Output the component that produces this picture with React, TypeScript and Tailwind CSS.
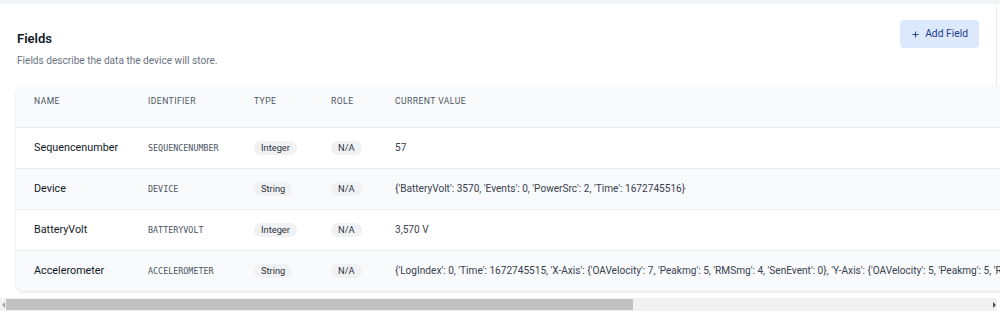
import { Plus } from 'lucide-react'

interface Field {
  name: string
  identifier: string
  type: string
  role: string
  value: string
}

const fields: Field[] = [
  { name: 'Sequencenumber', identifier: 'SEQUENCENUMBER', type: 'Integer', role: 'N/A', value: '57' },
  {
    name: 'Device',
    identifier: 'DEVICE',
    type: 'String',
    role: 'N/A',
    value: "{'BatteryVolt': 3570, 'Events': 0, 'PowerSrc': 2, 'Time': 1672745516}",
  },
  { name: 'BatteryVolt', identifier: 'BATTERYVOLT', type: 'Integer', role: 'N/A', value: '3,570 V' },
  {
    name: 'Accelerometer',
    identifier: 'ACCELEROMETER',
    type: 'String',
    role: 'N/A',
    value:
      "{'LogIndex': 0, 'Time': 1672745515, 'X-Axis': {'OAVelocity': 7, 'Peakmg': 5, 'RMSmg': 4, 'SenEvent': 0}, 'Y-Axis': {'OAVelocity': 5, 'Peakmg': 5, 'RMSmg': 4, 'SenEvent': 0}, 'Z-Axis': {'OAVelocity': 6, 'Peakmg': 5, 'RMSmg': 4, 'SenEvent': 0}}",
  },
]

const cols = 'grid grid-cols-[114px_106px_77px_64px_1fr] pl-[18px]'

function Badge({ children }: { children: React.ReactNode }) {
  return (
    <span className="inline-flex items-center h-[14px] px-[7px] rounded-full bg-[#f0f1f3] text-[9.3px] text-[#2d3340]">
      {children}
    </span>
  )
}

export default function App() {
  return (
    <div className="w-[1000px] h-[322px] overflow-hidden bg-[#f3f4f6] pt-[4px] font-['Roboto',sans-serif]">
      <div className="bg-white">
        {/* card header */}
        <div className="flex items-start justify-between mr-[3px] pl-[17px] pr-[17px] pt-[16px] pb-[19px] border-r border-[#e5e7eb] rounded-tr-md">
          <div className="pt-[11px]">
            <h2 className="text-[13px] leading-[16px] font-semibold text-[#111827]">Fields</h2>
            <p className="mt-[8px] text-[10.1px] leading-[12px] text-[#6b7280]">Fields describe the data the device will store.</p>
          </div>
          <button className="flex items-center gap-[5px] h-[28px] pl-[11px] pr-[11px] rounded-[4px] bg-[#dce8fb] text-[10.3px] text-[#1e3a8a]">
            <Plus className="w-[9px] h-[9px]" strokeWidth={2.5} />
            Add Field
          </button>
        </div>

        {/* table */}
        <div className="pl-[16px] pb-[7px]">
          <div className="w-[1600px] rounded-lg overflow-hidden bg-white shadow-[0_1px_3px_rgba(0,0,0,0.13)]">
            <div className={`${cols} h-[41px] pt-[9px] bg-[#f9fafb] text-[8.6px] leading-[12px] tracking-[0.05em] text-[#4b5563]`}>
              <div>NAME</div>
              <div>IDENTIFIER</div>
              <div>TYPE</div>
              <div>ROLE</div>
              <div>CURRENT VALUE</div>
            </div>
            {fields.map((f, i) => (
              <div
                key={f.identifier}
                className={`${cols} items-center h-[41px] border-t border-[#e8eaed] ${i % 2 === 1 ? 'bg-[#f9fafb]' : 'bg-white'}`}
              >
                <div className="text-[10.8px] text-[#111827]">{f.name}</div>
                <div className="font-['DejaVu_Sans_Mono',monospace] text-[8.4px] text-[#4b5563]">{f.identifier}</div>
                <div className="flex"><Badge>{f.type}</Badge></div>
                <div className="flex"><Badge>{f.role}</Badge></div>
                <div className="whitespace-nowrap text-[10.1px] text-[#374151]">{f.value}</div>
              </div>
            ))}
          </div>
        </div>

        {/* horizontal scrollbar */}
        <div className="flex items-center h-[13px] bg-[#f1f1f1] mr-[3px]">
          <div className="w-[6px] flex justify-center">
            <span className="w-0 h-0 border-y-[3px] border-y-transparent border-r-[3px] border-r-[#a3a3a3]" />
          </div>
          <div className="w-[627px] h-[11px] bg-[#c1c1c1]" />
          <div className="flex-1" />
          <div className="w-[6px] flex justify-center">
            <span className="w-0 h-0 border-y-[3px] border-y-transparent border-l-[3px] border-l-[#505050]" />
          </div>
        </div>
        <div className="h-[20px] bg-white" />
      </div>
    </div>
  )
}
